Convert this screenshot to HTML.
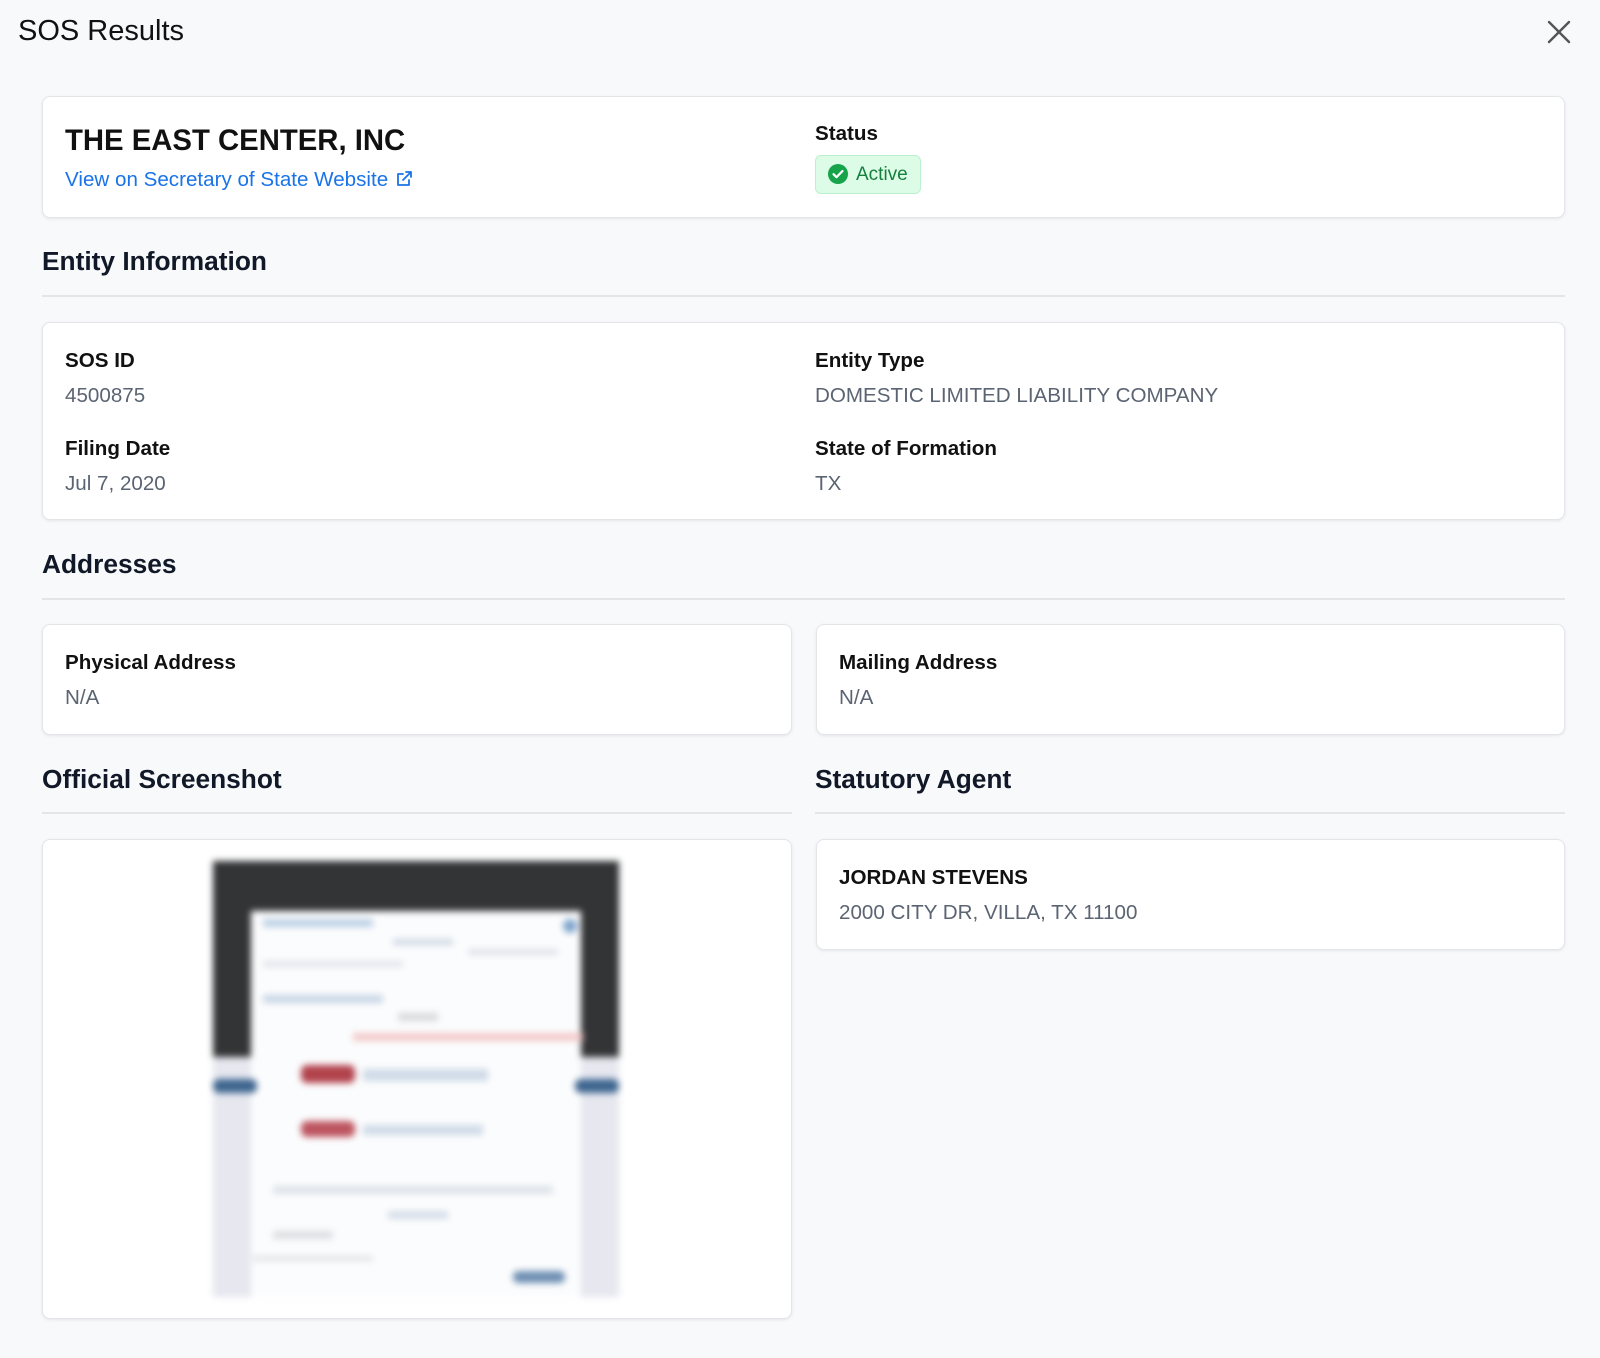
<!DOCTYPE html>
<html><head><meta charset="utf-8"><style>
*{box-sizing:border-box;margin:0;padding:0}
body{width:1600px;height:1358px;background:#f8f9fb;font-family:"Liberation Sans",Arial,sans-serif;position:relative;overflow:hidden;color:#111}
.abs{position:absolute}
.card{position:absolute;background:#fff;border:1px solid #e3e5e9;border-radius:8px;box-shadow:0 1px 3px rgba(0,0,0,.08)}
.h{position:absolute;font-size:26.3px;font-weight:bold;color:#111827}
.line{position:absolute;height:2px;background:#e3e5e9}
.lbl{position:absolute;font-size:20.6px;font-weight:bold;color:#111}
.val{position:absolute;font-size:20.6px;color:#5b6472}
</style></head><body>
<div class="abs" style="left:18px;top:15px;font-size:29px;color:#111">SOS Results</div>
<svg class="abs" style="left:1546px;top:19px" width="26" height="26" viewBox="0 0 26 26"><path d="M3 3L23 23M23 3L3 23" stroke="#555" stroke-width="2.4" stroke-linecap="round"/></svg>

<div class="card" style="left:42px;top:96px;width:1523px;height:122px"></div>
<div class="abs" style="left:65px;top:124px;font-size:29.3px;font-weight:bold;color:#111">THE EAST CENTER, INC</div>
<div class="abs" style="left:65px;top:168px;font-size:20.6px;color:#1a73e8">View on Secretary of State Website
<svg width="18" height="18" viewBox="0 0 18 18" style="vertical-align:-2px;margin-left:1px"><path d="M14 10v5H3V4h5M11 2h5v5M16 2L8 10" fill="none" stroke="#1a73e8" stroke-width="1.8" stroke-linecap="round" stroke-linejoin="round"/></svg></div>
<div class="lbl" style="left:815px;top:122px">Status</div>
<div class="abs" style="left:815px;top:155px;width:106px;height:39px;background:#dcfce7;border:1px solid #bbf0cc;border-radius:6px"></div>
<svg class="abs" style="left:828px;top:164px" width="20" height="20" viewBox="0 0 20 20"><circle cx="10" cy="10" r="10" fill="#16a34a"/><path d="M5.5 10.2l3 3 6-6.2" fill="none" stroke="#fff" stroke-width="2.2" stroke-linecap="round" stroke-linejoin="round"/></svg>
<div class="abs" style="left:856px;top:164px;font-size:19px;color:#15803d">Active</div>

<div class="h" style="left:42px;top:246px">Entity Information</div>
<div class="line" style="left:42px;top:295px;width:1523px"></div>
<div class="card" style="left:42px;top:322px;width:1523px;height:198px"></div>
<div class="lbl" style="left:65px;top:349px">SOS ID</div>
<div class="val" style="left:65px;top:384px">4500875</div>
<div class="lbl" style="left:65px;top:437px">Filing Date</div>
<div class="val" style="left:65px;top:472px">Jul 7, 2020</div>
<div class="lbl" style="left:815px;top:349px">Entity Type</div>
<div class="val" style="left:815px;top:384px">DOMESTIC LIMITED LIABILITY COMPANY</div>
<div class="lbl" style="left:815px;top:437px">State of Formation</div>
<div class="val" style="left:815px;top:472px">TX</div>

<div class="h" style="left:42px;top:549px">Addresses</div>
<div class="line" style="left:42px;top:598px;width:1523px"></div>
<div class="card" style="left:42px;top:624px;width:750px;height:111px"></div>
<div class="card" style="left:816px;top:624px;width:749px;height:111px"></div>
<div class="lbl" style="left:65px;top:651px">Physical Address</div>
<div class="val" style="left:65px;top:686px">N/A</div>
<div class="lbl" style="left:839px;top:651px">Mailing Address</div>
<div class="val" style="left:839px;top:686px">N/A</div>

<div class="h" style="left:42px;top:764px">Official Screenshot</div>
<div class="line" style="left:42px;top:812px;width:750px"></div>
<div class="h" style="left:815px;top:764px">Statutory Agent</div>
<div class="line" style="left:815px;top:812px;width:750px"></div>

<div class="card" style="left:42px;top:839px;width:750px;height:480px;overflow:hidden">
 <div style="position:absolute;left:170px;top:21px;width:406px;height:436px;filter:blur(3.5px)">
  <div style="position:absolute;left:0;top:0;width:406px;height:196px;background:#333436"></div>
  <div style="position:absolute;left:0;top:196px;width:406px;height:240px;background:#e6e7ef"></div>
  <div style="position:absolute;left:38px;top:50px;width:330px;height:386px;background:#fbfcfd"></div>
  <div style="position:absolute;left:50px;top:58px;width:110px;height:8px;background:#bcd0e4"></div>
  <div style="position:absolute;left:350px;top:58px;width:14px;height:14px;border-radius:7px;background:#7fa4cc"></div>
  <div style="position:absolute;left:180px;top:78px;width:60px;height:6px;background:#cfd8e4"></div>
  <div style="position:absolute;left:255px;top:88px;width:90px;height:6px;background:#dde2ea"></div>
  <div style="position:absolute;left:50px;top:100px;width:140px;height:6px;background:#e0e4ea"></div>
  <div style="position:absolute;left:50px;top:134px;width:120px;height:8px;background:#c8d6e6"></div>
  <div style="position:absolute;left:185px;top:152px;width:40px;height:8px;background:#d8dadd"></div>
  <div style="position:absolute;left:140px;top:172px;width:230px;height:8px;background:#f3c9c9"></div>
  <div style="position:absolute;left:88px;top:204px;width:54px;height:18px;border-radius:6px;background:#b2434d"></div>
  <div style="position:absolute;left:150px;top:208px;width:125px;height:12px;background:#cfdbe8"></div>
  <div style="position:absolute;left:88px;top:260px;width:54px;height:16px;border-radius:6px;background:#bd5560"></div>
  <div style="position:absolute;left:150px;top:264px;width:120px;height:10px;background:#cfdbe8"></div>
  <div style="position:absolute;left:0;top:218px;width:44px;height:14px;border-radius:6px;background:#3f6690"></div>
  <div style="position:absolute;left:362px;top:218px;width:44px;height:14px;border-radius:6px;background:#3f6690"></div>
  <div style="position:absolute;left:300px;top:410px;width:52px;height:12px;border-radius:5px;background:#6e8fb3"></div>
  <div style="position:absolute;left:60px;top:325px;width:280px;height:8px;background:#dde3ea"></div>
  <div style="position:absolute;left:175px;top:350px;width:60px;height:8px;background:#d5deea"></div>
  <div style="position:absolute;left:60px;top:370px;width:60px;height:8px;background:#dcdee2"></div>
  <div style="position:absolute;left:40px;top:395px;width:120px;height:5px;background:#e0e2e6"></div>
 </div>
</div>

<div class="card" style="left:816px;top:839px;width:749px;height:111px"></div>
<div class="lbl" style="left:839px;top:866px">JORDAN STEVENS</div>
<div class="val" style="left:839px;top:901px">2000 CITY DR, VILLA, TX 11100</div>
</body></html>
